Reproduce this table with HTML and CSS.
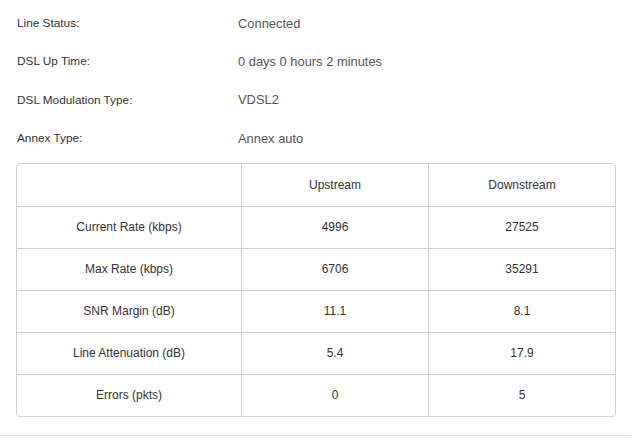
FILE: index.html
```html
<!DOCTYPE html>
<html>
<head>
<meta charset="utf-8">
<link rel="stylesheet" href="styles.css">
</head>
<body>
<div class="page">
  <div class="info">
    <div class="info-row"><span class="label">Line Status:</span><span class="value">Connected</span></div>
    <div class="info-row"><span class="label">DSL Up Time:</span><span class="value">0 days 0 hours 2 minutes</span></div>
    <div class="info-row"><span class="label">DSL Modulation Type:</span><span class="value">VDSL2</span></div>
    <div class="info-row"><span class="label">Annex Type:</span><span class="value">Annex auto</span></div>
  </div>
  <div class="table-wrap">
    <table class="stats">
      <tr class="head"><th></th><th>Upstream</th><th>Downstream</th></tr>
      <tr><td>Current Rate (kbps)</td><td>4996</td><td>27525</td></tr>
      <tr><td>Max Rate (kbps)</td><td>6706</td><td>35291</td></tr>
      <tr><td>SNR Margin (dB)</td><td>11.1</td><td>8.1</td></tr>
      <tr><td>Line Attenuation (dB)</td><td>5.4</td><td>17.9</td></tr>
      <tr><td>Errors (pkts)</td><td>0</td><td>5</td></tr>
    </table>
  </div>
  <div class="divider"></div>
</div>
</body>
</html>
```
FILE: styles.css
```css
html, body {
  margin: 0;
  padding: 0;
  background: #fff;
}
body {
  font-family: "Liberation Sans", Arial, sans-serif;
  color: #333;
}
.page {
  width: 635px;
  padding-top: 4px;
}
.info {
  display: flex;
  flex-direction: column;
}
.info-row {
  display: flex;
  align-items: center;
  height: 38.3px;
}
.label {
  width: 221px;
  padding-left: 17px;
  font-size: 11.8px;
  color: #333;
}
.value {
  font-size: 12.9px;
  color: #555;
}
.table-wrap {
  margin: 6px 0 0 16px;
  width: 598px;
  border: 1px solid #cfcfcf;
  border-radius: 4px;
  overflow: hidden;
}
.stats {
  width: 100%;
  border-collapse: separate;
  border-spacing: 0;
  table-layout: fixed;
  font-size: 12px;
  color: #333;
}
.stats th, .stats td {
  font-weight: normal;
  text-align: center;
  padding: 0 0 1px;
  height: 40px;
  border-right: 1px solid #cfcfcf;
  border-bottom: 1px solid #cfcfcf;
}
.stats th:nth-child(1), .stats td:nth-child(1) { width: 224px; }
.stats th:nth-child(2), .stats td:nth-child(2) { width: 186px; }
.stats .head th { height: 41px; }
.stats th:last-child, .stats td:last-child { border-right: none; }
.stats tr:last-child td { border-bottom: none; }
.divider {
  margin-top: 18px;
  width: 630px;
  height: 1px;
  background: #ddd;
}
```
